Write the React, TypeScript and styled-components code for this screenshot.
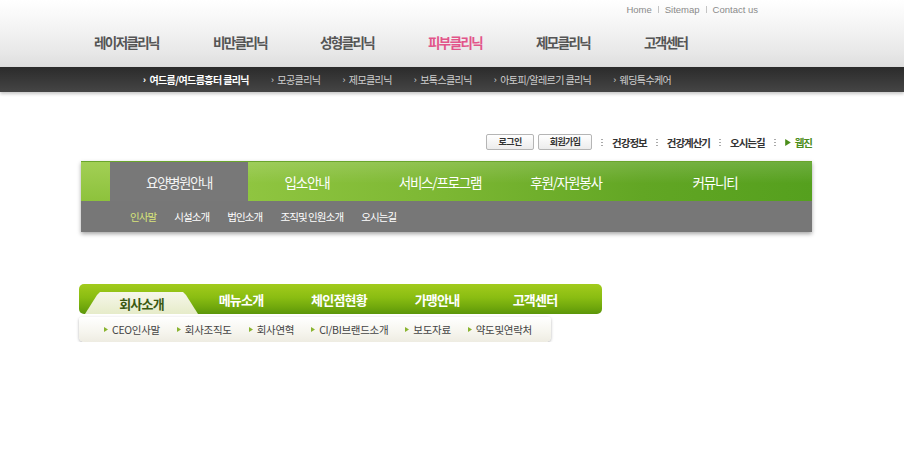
import React from "react";
import styled, { createGlobalStyle } from "styled-components";

const Global = createGlobalStyle`
  html, body { margin: 0; padding: 0; background: #fff; }
  body { font-family: "Noto Sans CJK KR", "Liberation Sans", sans-serif; }
  #root { min-height: 453px; }
`;

const Page = styled.div`
  width: 904px;
  overflow: hidden;
`;

/* ---------- Top header ---------- */
const Header = styled.header`
  height: 67px;
  background: linear-gradient(#ffffff 0%, #f7f7f7 30%, #e9e9e9 75%, #dedede 100%);
  display: flex;
  flex-direction: column;
`;

const TopLinks = styled.div`
  display: flex;
  justify-content: flex-end;
  align-items: center;
  gap: 6px;
  padding: 2px 146px 0 0;
  height: 14px;
  font-family: "Liberation Sans", Arial, sans-serif;
  font-size: 9.5px;
  color: #8a8a8a;
`;

const TopSep = styled.span`
  width: 1px;
  height: 7px;
  background: #c4c4c4;
`;

const MainNav = styled.nav`
  display: flex;
  align-items: center;
  padding: 17px 0 0 94px;
`;

const MainItem = styled.a<{ $w: number; $active?: boolean }>`
  width: ${(p) => p.$w}px;
  font-size: 13.5px;
  font-weight: 700;
  letter-spacing: -1.6px;
  color: ${(p) => (p.$active ? "#e2558a" : "#555")};
  text-decoration: none;
  white-space: nowrap;
  line-height: 18px;
`;

const DarkBar = styled.div`
  height: 25px;
  background: linear-gradient(#2b2b2b, #3d3d3d 70%, #454545);
  box-shadow: 0 2px 3px rgba(0, 0, 0, 0.22);
  display: flex;
  align-items: center;
  padding-left: 143px;
  gap: 22px;
`;

const DarkItem = styled.a<{ $active?: boolean }>`
  font-size: 10px;
  letter-spacing: -0.6px;
  color: ${(p) => (p.$active ? "#fff" : "#cfcfcf")};
  font-weight: ${(p) => (p.$active ? 700 : 400)};
  white-space: nowrap;
  text-decoration: none;
  display: flex;
  align-items: center;
  gap: 4px;
`;

const Chevron = styled.span`
  font-size: 9px;
  font-family: "Liberation Sans", sans-serif;
`;

/* ---------- Login / util row ---------- */
const Section = styled.section`
  padding: 42px 0 0 81px;
  width: 731px;
`;

const UtilRow = styled.div`
  display: flex;
  justify-content: flex-end;
  align-items: center;
  height: 16px;
  gap: 4px;
`;

const SmallButton = styled.button<{ $w: number }>`
  width: ${(p) => p.$w}px;
  height: 16px;
  padding: 0;
  border: 1px solid #b5b5b5;
  border-radius: 2px;
  background: linear-gradient(#ffffff, #ececec);
  font-family: "Noto Sans CJK KR", sans-serif;
  font-size: 9px;
  letter-spacing: -0.6px;
  color: #333;
  font-weight: 700;
  line-height: 14px;
`;

const Dots = styled.span`
  width: 2px;
  height: 8px;
  margin: 0 5px;
  background: radial-gradient(circle, #aaa 45%, transparent 50%) 0 0 / 2px 3px repeat-y;
`;

const UtilLink = styled.a<{ $green?: boolean }>`
  font-size: 10.5px;
  font-weight: 700;
  letter-spacing: -1px;
  color: ${(p) => (p.$green ? "#4b8d1a" : "#333")};
  text-decoration: none;
  white-space: nowrap;
  display: flex;
  align-items: center;
  gap: 4px;
`;

/* ---------- Green panel ---------- */
const Panel = styled.div`
  margin-top: 11px;
  box-shadow: 0 2px 4px rgba(0, 0, 0, 0.35);
  background: #777;
`;

const PanelTop = styled.div`
  display: flex;
  height: 40px;
  border-top: 1px solid #6aa52c;
  box-sizing: border-box;
`;

const LeftBlock = styled.div`
  width: 29px;
  background: linear-gradient(#a2cf55, #8dc23c);
`;

const ActiveTab = styled.a`
  width: 138px;
  background: #787878;
  color: #f4f4f4;
  display: flex;
  align-items: center;
  justify-content: center;
  font-size: 13.5px;
  letter-spacing: -1.4px;
  text-decoration: none;
`;

const GreenArea = styled.div`
  flex: 1;
  display: flex;
  background:
    linear-gradient(rgba(255, 255, 255, 0.14), rgba(255, 255, 255, 0) 55%),
    linear-gradient(90deg, #8fc540 0%, #7cb733 35%, #62a624 70%, #55a01e 100%);
`;

const PanelItem = styled.a<{ $w: number }>`
  width: ${(p) => p.$w}px;
  display: flex;
  align-items: center;
  justify-content: center;
  color: #fff;
  font-size: 13.5px;
  letter-spacing: -1.2px;
  text-decoration: none;
  white-space: nowrap;
`;

const PanelSub = styled.div`
  height: 31px;
  display: flex;
  align-items: center;
  gap: 18px;
  padding-left: 49px;
  background: #777;
`;

const PanelSubItem = styled.a<{ $active?: boolean }>`
  font-size: 10.5px;
  letter-spacing: -0.9px;
  color: ${(p) => (p.$active ? "#d8e47a" : "#fff")};
  text-decoration: none;
  white-space: nowrap;
`;

/* ---------- Second nav ---------- */
const Section2 = styled.section`
  padding: 52px 0 0 79px;
`;

const GreenBar = styled.div`
  width: 523px;
  height: 30px;
  border-radius: 5px;
  background: linear-gradient(#a2cb1c 0%, #8abd12 45%, #6ea60c 80%, #5b950a 100%);
  display: flex;
  align-items: flex-end;
`;

const Tab2 = styled.a`
  width: 113px;
  height: 22px;
  margin-left: 6px;
  margin-right: -6px;
  background: linear-gradient(#f6f7ea, #e6ecc9);
  clip-path: polygon(0 100%, 12px 3px, 15px 0, calc(100% - 15px) 0, calc(100% - 12px) 3px, 100% 100%);
  display: flex;
  align-items: center;
  justify-content: center;
  padding-top: 1px;
  box-sizing: border-box;
  color: #3b5912;
  font-size: 13px;
  font-weight: 700;
  letter-spacing: -0.8px;
  text-decoration: none;
`;

const Bar2Item = styled.a`
  width: 98px;
  height: 30px;
  display: flex;
  align-items: center;
  justify-content: center;
  color: #fff;
  font-size: 13px;
  font-weight: 700;
  letter-spacing: -0.8px;
  text-decoration: none;
  white-space: nowrap;
`;

const SubBar2 = styled.div`
  width: 472px;
  height: 25px;
  margin-top: 3px;
  border-radius: 3px 3px 5px 5px;
  background: linear-gradient(#ffffff, #f6f5ee 60%, #eeece2);
  box-shadow: 0 1px 3px rgba(0, 0, 0, 0.3);
  display: flex;
  align-items: center;
  padding-left: 25px;
  box-sizing: border-box;
  gap: 17px;
`;

const Sub2Item = styled.a`
  display: flex;
  align-items: center;
  gap: 4px;
  font-size: 10.5px;
  letter-spacing: -0.3px;
  color: #444;
  text-decoration: none;
  white-space: nowrap;
`;

const Tri = ({ color = "#8ab430", size = 5 }: { color?: string; size?: number }) => (
  <svg width={size - 1} height={size} viewBox="0 0 4 5">
    <path d="M0 0 L4 2.5 L0 5 Z" fill={color} />
  </svg>
);

export default function App() {
  const mainNav: [string, number, boolean?][] = [
    ["레이저클리닉", 119],
    ["비만클리닉", 107],
    ["성형클리닉", 108],
    ["피부클리닉", 108, true],
    ["제모클리닉", 108],
    ["고객센터", 80],
  ];
  const darkItems = [
    "여드름/여드름흉터 클리닉",
    "모공클리닉",
    "제모클리닉",
    "보톡스클리닉",
    "아토피/알레르기 클리닉",
    "웨딩특수케어",
  ];
  const panelItems: [string, number][] = [
    ["입소안내", 118],
    ["서비스/프로그램", 148],
    ["후원/자원봉사", 104],
    ["커뮤니티", 194],
  ];
  const panelSub = ["인사말", "시설소개", "법인소개", "조직및 인원소개", "오시는길"];
  const bar2 = ["메뉴소개", "체인점현황", "가맹안내", "고객센터"];
  const sub2 = ["CEO인사말", "회사조직도", "회사연혁", "CI/BI브랜드소개", "보도자료", "약도및연락처"];

  return (
    <Page>
      <Global />
      <Header>
        <TopLinks>
          <span>Home</span>
          <TopSep />
          <span>Sitemap</span>
          <TopSep />
          <span>Contact us</span>
        </TopLinks>
        <MainNav>
          {mainNav.map(([t, w, a]) => (
            <MainItem key={t} $w={w} $active={a}>
              {t}
            </MainItem>
          ))}
        </MainNav>
      </Header>
      <DarkBar>
        {darkItems.map((t, i) => (
          <DarkItem key={t} $active={i === 0}>
            <Chevron>›</Chevron>
            {t}
          </DarkItem>
        ))}
      </DarkBar>

      <Section>
        <UtilRow>
          <SmallButton $w={48}>로그인</SmallButton>
          <SmallButton $w={54}>회원가입</SmallButton>
          <Dots />
          <UtilLink>건강정보</UtilLink>
          <Dots />
          <UtilLink>건강계산기</UtilLink>
          <Dots />
          <UtilLink>오시는길</UtilLink>
          <Dots />
          <UtilLink $green>
            <Tri color="#4b8d1a" size={7} />
            웹진
          </UtilLink>
        </UtilRow>

        <Panel>
          <PanelTop>
            <LeftBlock />
            <ActiveTab>요양병원안내</ActiveTab>
            <GreenArea>
              {panelItems.map(([t, w]) => (
                <PanelItem key={t} $w={w}>
                  {t}
                </PanelItem>
              ))}
            </GreenArea>
          </PanelTop>
          <PanelSub>
            {panelSub.map((t, i) => (
              <PanelSubItem key={t} $active={i === 0}>
                {t}
              </PanelSubItem>
            ))}
          </PanelSub>
        </Panel>
      </Section>

      <Section2>
        <GreenBar>
          <Tab2>회사소개</Tab2>
          {bar2.map((t) => (
            <Bar2Item key={t}>{t}</Bar2Item>
          ))}
        </GreenBar>
        <SubBar2>
          {sub2.map((t) => (
            <Sub2Item key={t}>
              <Tri />
              {t}
            </Sub2Item>
          ))}
        </SubBar2>
      </Section2>
    </Page>
  );
}
